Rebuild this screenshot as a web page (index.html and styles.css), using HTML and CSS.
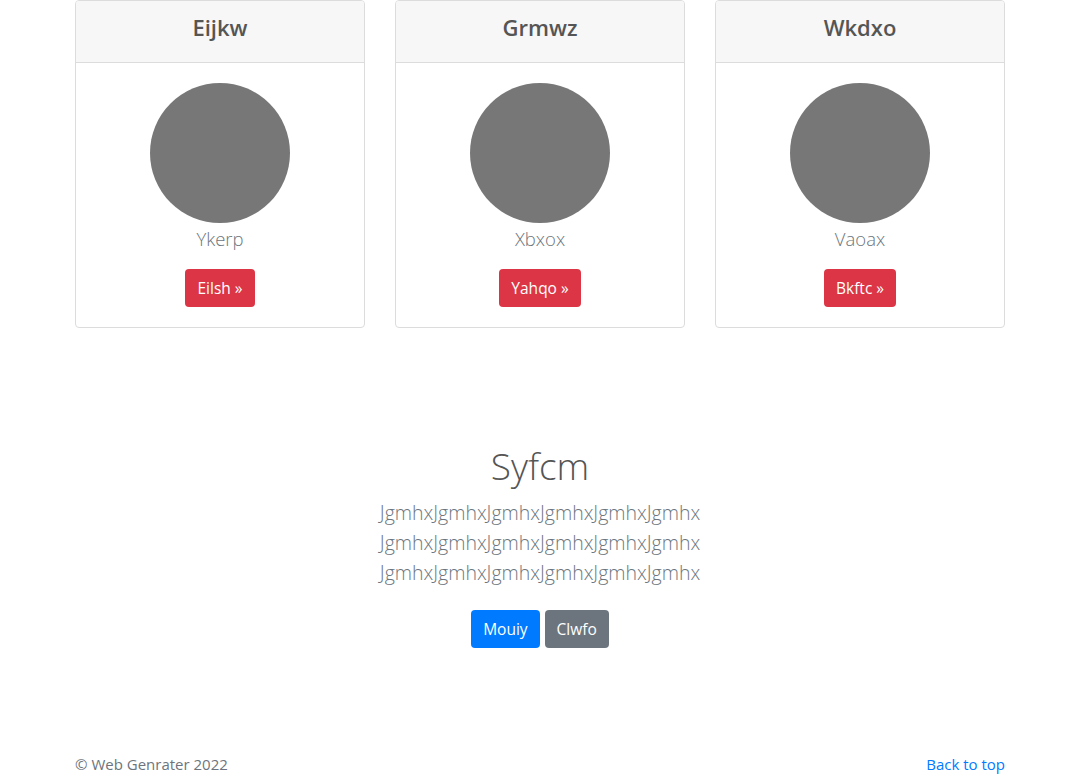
FILE: index.html
```html
<!DOCTYPE html>
<html lang="en">
<head>
<meta charset="utf-8">
<title>Cards</title>
<link rel="stylesheet" href="styles.css">
</head>
<body>
<main class="container">
  <div class="card-row">
    <div class="card">
      <div class="card-header"><h4 class="card-title">Eijkw</h4></div>
      <div class="card-body">
        <div class="avatar"></div>
        <p class="card-name">Ykerp</p>
        <a class="btn btn-danger" href="#">Eilsh &raquo;</a>
      </div>
    </div>
    <div class="card">
      <div class="card-header"><h4 class="card-title">Grmwz</h4></div>
      <div class="card-body">
        <div class="avatar"></div>
        <p class="card-name">Xbxox</p>
        <a class="btn btn-danger" href="#">Yahqo &raquo;</a>
      </div>
    </div>
    <div class="card">
      <div class="card-header"><h4 class="card-title">Wkdxo</h4></div>
      <div class="card-body">
        <div class="avatar"></div>
        <p class="card-name">Vaoax</p>
        <a class="btn btn-danger" href="#">Bkftc &raquo;</a>
      </div>
    </div>
  </div>

  <section class="hero">
    <h1 class="hero-title">Syfcm</h1>
    <p class="lead">JgmhxJgmhxJgmhxJgmhxJgmhxJgmhx JgmhxJgmhxJgmhxJgmhxJgmhxJgmhx JgmhxJgmhxJgmhxJgmhxJgmhxJgmhx</p>
    <p class="hero-actions">
      <a class="btn btn-primary" href="#">Mouiy</a>
      <a class="btn btn-secondary" href="#">Clwfo</a>
    </p>
  </section>
</main>
<footer class="footer">
  <span class="copy">&copy; Web Genrater 2022</span>
  <a class="back" href="#">Back to top</a>
</footer>
</body>
</html>
```

FILE: styles.css
```css
* { box-sizing: border-box; }
html, body { margin: 0; padding: 0; }
body {
  font-family: "Open Sans", "Noto Sans", sans-serif;
  font-size: 15px;
  line-height: 1.5;
  color: #212529;
  background: #fff;
}
.container {
  width: 930px;
  margin: 0 auto;
}
.card-row {
  display: flex;
  gap: 30px;
}
.card {
  width: 290px;
  border: 1px solid #dcdcdc;
  border-radius: 4px;
  overflow: hidden;
  text-align: center;
}
.card-header {
  height: 62px;
  padding-bottom: 8px;
  background: #f7f7f7;
  border-bottom: 1px solid #dcdcdc;
  display: flex;
  align-items: center;
  justify-content: center;
}
.card-title {
  margin: 0;
  font-size: 22px;
  font-weight: 600;
  color: #555;
  line-height: 1.2;
}
.card-body {
  padding: 20px 20px 20px;
  display: flex;
  flex-direction: column;
  align-items: center;
}
.avatar {
  width: 140px;
  height: 140px;
  border-radius: 50%;
  background: #777;
}
.card-name {
  margin: 1px 0 15px;
  font-size: 18.5px;
  font-weight: 300;
  line-height: 30px;
  color: #6c757d;
}
.btn {
  display: inline-block;
  height: 38px;
  line-height: 38px;
  padding: 0 12px;
  font-size: 15.5px;
  color: #fff;
  text-decoration: none;
  border-radius: 4px;
}
.btn-danger { background: #dc3545; }
.btn-primary { background: #007bff; }
.btn-secondary { background: #6c757d; }

.hero {
  text-align: center;
  padding-top: 114px;
}
.hero-title {
  margin: 0 0 8px;
  font-size: 37px;
  font-weight: 300;
  line-height: 48px;
  color: #555;
}
.lead {
  width: 460px;
  margin: 0 auto 22px;
  font-size: 19.5px;
  font-weight: 300;
  line-height: 30px;
  color: #6c757d;
}
.hero-actions {
  margin: 0;
  display: flex;
  justify-content: center;
  gap: 5px;
}
.footer {
  width: 930px;
  margin: 104px auto 0;
  display: flex;
  justify-content: space-between;
  line-height: 24px;
  font-size: 15px;
}
.copy { color: #6c757d; }
.back { color: #007bff; text-decoration: none; }
```
